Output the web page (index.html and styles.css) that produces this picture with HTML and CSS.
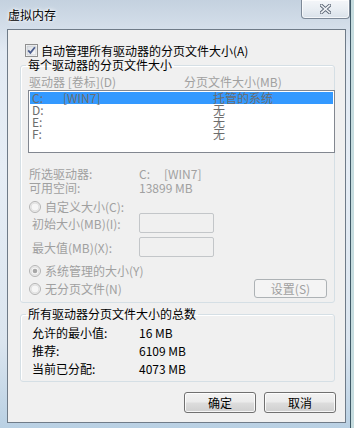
FILE: index.html
```html
<!DOCTYPE html>
<html lang="zh-CN">
<head>
  <meta charset="UTF-8">
  <title>虚拟内存</title>
  <link rel="stylesheet" href="styles.css">
</head>
<body>
  <div class="window">
    <div class="titlebar">
      <span class="title">虚拟内存</span>
      <div class="close-btn">
        <svg width="11" height="10" viewBox="0 0 11 10">
          <path d="M1.5 1.5 L9.5 8.5 M9.5 1.5 L1.5 8.5" stroke="#5c6776" stroke-width="3.4" stroke-linecap="square" fill="none"/>
          <path d="M1.5 1.5 L9.5 8.5 M9.5 1.5 L1.5 8.5" stroke="#f1f3f6" stroke-width="1.6" stroke-linecap="square" fill="none"/>
        </svg>
      </div>
    </div>

    <div class="client">
      <div class="check-row">
        <svg class="checkbox" width="13" height="13" viewBox="0 0 13 13">
          <defs>
            <linearGradient id="cbg" x1="0" y1="0" x2="1" y2="1">
              <stop offset="0" stop-color="#d8dbe0"/>
              <stop offset="1" stop-color="#fbfbfc"/>
            </linearGradient>
          </defs>
          <rect x="0.5" y="0.5" width="12" height="12" fill="#fff" stroke="#8f8f8f"/>
          <rect x="2" y="2" width="9" height="9" fill="url(#cbg)" stroke="#c4c8ce" stroke-width="0.8"/>
          <path d="M3.2 6.4 L5.4 8.9 L9.9 3.2" stroke="#4b5d8d" stroke-width="1.8" fill="none"/>
        </svg>
        <span>自动管理所有驱动器的分页文件大小(A)</span>
      </div>

      <fieldset class="group drives">
        <legend>每个驱动器的分页文件大小</legend>
        <div class="list-head">
          <span>驱动器 [卷标](D)</span>
          <span>分页文件大小(MB)</span>
        </div>
        <div class="listbox">
          <div class="list-row selected"><span><span class="drv">C:</span>[WIN7]</span><span>托管的系统</span></div>
          <div class="list-row"><span>D:</span><span>无</span></div>
          <div class="list-row"><span>E:</span><span>无</span></div>
          <div class="list-row"><span>F:</span><span>无</span></div>
        </div>

        <div class="info">
          <span>所选驱动器:</span><span><span class="drv-sm">C:</span>[WIN7]</span>
          <span>可用空间:</span><span>13899 MB</span>
        </div>

        <div class="radio-row">
          <svg class="radio" width="12" height="12" viewBox="0 0 12 12">
            <circle cx="6" cy="6" r="5.5" fill="#eeeeee" stroke="#b4b4b4"/>
            <circle cx="6" cy="6" r="4" fill="#f6f6f6" stroke="#dcdcdc" stroke-width="0.8"/>
          </svg>
          <span>自定义大小(C):</span>
        </div>
        <div class="field-row">
          <span>初始大小(MB)(I):</span>
          <div class="textbox"></div>
        </div>
        <div class="field-row second">
          <span>最大值(MB)(X):</span>
          <div class="textbox"></div>
        </div>

        <div class="radio-row managed">
          <svg class="radio" width="12" height="12" viewBox="0 0 12 12">
            <circle cx="6" cy="6" r="5.5" fill="#eeeeee" stroke="#b4b4b4"/>
            <circle cx="6" cy="6" r="4" fill="#f6f6f6" stroke="#dcdcdc" stroke-width="0.8"/>
            <circle cx="6" cy="6" r="2.3" fill="#a8a8a8"/>
          </svg>
          <span>系统管理的大小(Y)</span>
        </div>
        <div class="last-row">
          <div class="radio-row inline">
            <svg class="radio" width="12" height="12" viewBox="0 0 12 12">
              <circle cx="6" cy="6" r="5.5" fill="#eeeeee" stroke="#b4b4b4"/>
              <circle cx="6" cy="6" r="4" fill="#f6f6f6" stroke="#dcdcdc" stroke-width="0.8"/>
            </svg>
            <span>无分页文件(N)</span>
          </div>
          <div class="btn disabled set-btn">设置(S)</div>
        </div>
      </fieldset>

      <fieldset class="group totals">
        <legend>所有驱动器分页文件大小的总数</legend>
        <div class="total-row"><span>允许的最小值:</span><span>16 MB</span></div>
        <div class="total-row"><span>推荐:</span><span>6109 MB</span></div>
        <div class="total-row"><span>当前已分配:</span><span>4073 MB</span></div>
      </fieldset>

      <div class="buttons">
        <div class="btn">确定</div>
        <div class="btn">取消</div>
      </div>
    </div>
  </div>
</body>
</html>
```

FILE: styles.css
```css
* {
  box-sizing: border-box;
}
html, body {
  margin: 0;
  padding: 0;
}
body {
  width: 354px;
  height: 428px;
  overflow: hidden;
  font-family: "Noto Sans CJK SC", "Liberation Sans", sans-serif;
  font-size: 12px;
  color: #000;
  background: #c6dcdf;
}
.window {
  width: 354px;
  height: 428px;
  display: flex;
  flex-direction: column;
  background: linear-gradient(180deg, #c4d1df 0%, #e2eaf3 12%, #e6edf5 40%, #dbe5ef 80%, #b9d0e3 100%);
  box-shadow: inset -3px 0 0 #c6dcdf, inset -4px 0 0 #3f5966;
}
.titlebar {
  height: 29px;
  display: flex;
  align-items: flex-start;
  justify-content: space-between;
  padding-left: 8px;
}
.title {
  line-height: 12px;
  margin-top: 9px;
  text-shadow: 0 0 5px #fff, 0 0 3px #fff;
}
.close-btn {
  width: 49px;
  height: 19px;
  margin-right: 4px;
  border: 1px solid #7d8998;
  border-top: none;
  border-radius: 0 0 4px 4px;
  background: linear-gradient(180deg, #f4f6f9 0%, #e9eef3 50%, #d9e1ea 100%);
  box-shadow: inset 0 0 0 1px rgba(255,255,255,0.7);
  display: flex;
  align-items: center;
  justify-content: center;
}
.client {
  flex: 1;
  margin: 0 8px 5px 7px;
  border: 1px solid #6f7b88;
  background: #f0f0f0;
  padding: 14px 10px 0 12px;
  display: flex;
  flex-direction: column;
}
.check-row {
  display: flex;
  align-items: center;
  gap: 3px;
  height: 13px;
  line-height: 13px;
  padding-left: 5px;
}
.checkbox, .radio {
  flex: none;
  display: block;
}
.group {
  margin: 0;
  min-width: 0;
  border: 1px solid #d5dfe5;
  border-radius: 3px;
  box-shadow: inset 1px 1px 0 #fff;
}
.group legend {
  line-height: 14px;
  padding: 0 2px;
  margin-left: -2px;
}
.drives {
  margin-top: 1px;
  padding: 3px 0 4px 7px;
}
.list-head {
  display: grid;
  grid-template-columns: 155px 1fr;
  line-height: 13px;
  padding-left: 1px;
  color: #a0a0a0;
}
.listbox {
  margin-top: 2px;
  margin-right: -1px;
  height: 63px;
  border: 1px solid #828790;
  background: #fff;
  padding: 1px;
}
.list-row {
  display: grid;
  grid-template-columns: 181px 1fr;
  height: 12px;
  line-height: 12px;
  padding-left: 2px;
  color: #6d6d6d;
}
.list-row.selected {
  background: #3399ff;
}
.drv {
  display: inline-block;
  width: 31px;
}
.drv-sm {
  display: inline-block;
  width: 25px;
}
.info {
  margin-top: 14px;
  display: grid;
  grid-template-columns: 110px 1fr;
  line-height: 14px;
  padding-left: 1px;
  color: #a0a0a0;
}
.radio-row {
  display: flex;
  align-items: center;
  gap: 4px;
  height: 12px;
  line-height: 12px;
  margin-top: 6px;
  padding-left: 1px;
  color: #a0a0a0;
}
.radio-row.managed {
  margin-top: 8px;
}
.radio-row.inline {
  margin-top: 0;
}
.field-row {
  display: grid;
  grid-template-columns: 111px 75px;
  align-items: center;
  height: 20px;
  padding-left: 4px;
  color: #a0a0a0;
}
.field-row span {
  margin-right: -4px;
}
.field-row .textbox {
  margin-left: -4px;
}
.field-row.second {
  margin-top: 4px;
}
.textbox {
  width: 75px;
  height: 20px;
  border: 1px solid #c3c6c9;
  border-radius: 2px;
  background: #f0f0f0;
}
.last-row {
  margin-top: 2px;
  height: 19px;
  display: flex;
  align-items: center;
  justify-content: space-between;
}
.btn {
  width: 72px;
  height: 21px;
  line-height: 19px;
  text-align: center;
  border: 1px solid #707070;
  border-radius: 3px;
  background: linear-gradient(180deg, #f2f2f2 0%, #ebebeb 48%, #dddddd 52%, #cfcfcf 100%);
  box-shadow: inset 0 0 0 1px rgba(255,255,255,0.8);
}
.btn.disabled {
  color: #a0a0a0;
  border-color: #adb2b5;
  background: #f4f4f4;
  box-shadow: none;
}
.set-btn {
  width: 73px;
  height: 19px;
  line-height: 17px;
  margin-right: 7px;
}
.totals {
  margin-top: 4px;
  padding: 3px 0 3px 7px;
}
.total-row {
  display: grid;
  grid-template-columns: 107px 1fr;
  height: 18px;
  line-height: 18px;
  padding-left: 4px;
}
.buttons {
  margin-top: 10px;
  margin-right: -1px;
  display: flex;
  justify-content: flex-end;
  gap: 8px;
}
```
